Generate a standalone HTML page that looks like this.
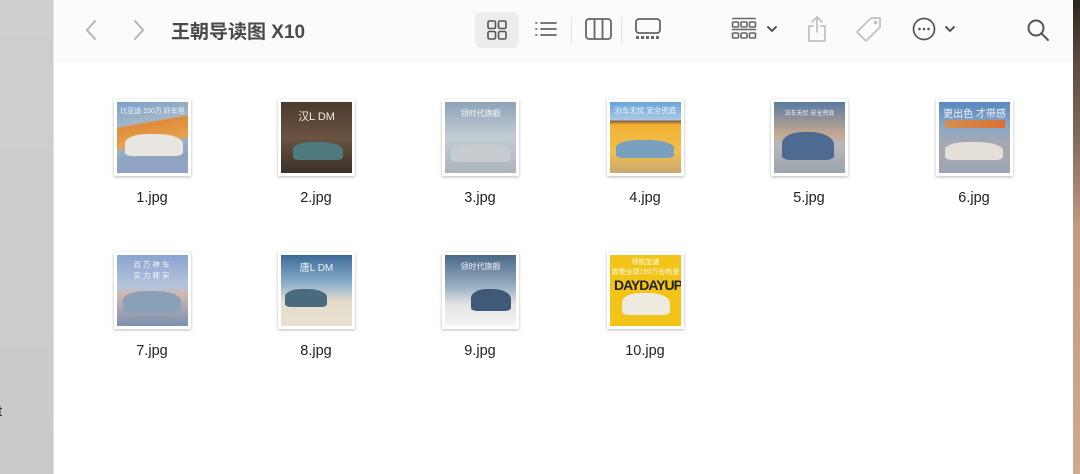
<!DOCTYPE html>
<html><head><meta charset="utf-8"><style>
*{margin:0;padding:0;box-sizing:border-box}
body{width:1080px;height:474px;overflow:hidden;position:relative;background:#fff;font-family:"Liberation Sans","Noto Sans CJK SC",sans-serif}
.left{position:absolute;left:0;top:0;width:54px;height:474px;background:linear-gradient(#cfcfcd,#cacac9)}
.left:after{content:"";position:absolute;right:0;top:0;width:1px;height:100%;background:#e2e2e2}
.right{position:absolute;left:1073px;top:0;width:7px;height:474px;background:linear-gradient(#2b2520 0,#5a4a3c 60px,#8a7060 150px,#c49a84 230px,#d0a890 474px)}
.win{position:absolute;left:55px;top:0;width:1018px;height:474px;background:#fff;border-top-right-radius:10px;overflow:hidden}
.tb{position:absolute;left:0;top:0;width:100%;height:63px;background:#fbfbfb}
.title{position:absolute;left:116px;top:17px;font-size:19px;font-weight:bold;color:#4a4a4a;letter-spacing:0}
svg.i{position:absolute}
.sel{position:absolute;left:420px;top:12px;width:44px;height:36px;background:#ececec;border-radius:7px}
.sep{position:absolute;top:17px;width:1px;height:26px;background:#e4e4e4}
.it{position:absolute;width:80px;text-align:center}
.th{position:absolute;left:2px;top:0;width:77px;height:77px;background:#fff;box-shadow:0 1px 3px rgba(0,0,0,.28);padding:3px}
.im{width:71px;height:71px;position:relative;overflow:hidden}
.lb{position:absolute;top:91px;left:0;width:80px;font-size:14.5px;color:#222}
.car{position:absolute;border-radius:40% 45% 15% 15%}
.tx{position:absolute;left:0;width:100%;text-align:center;color:#fff;font-size:7px;opacity:.9}
</style></head><body>
<div class="left"><div style="position:absolute;left:-2px;top:403px;font-size:15px;color:#333">t</div></div>
<div class="right"></div>
<div class="win">
<div class="tb">
<svg class="i" style="left:28px;top:18px" width="16" height="24" viewBox="0 0 16 24"><path d="M12 3 L4 12 L12 21" stroke="#b5b5b5" stroke-width="2" fill="none" stroke-linecap="round"/></svg>
<svg class="i" style="left:76px;top:18px" width="16" height="24" viewBox="0 0 16 24"><path d="M4 3 L12 12 L4 21" stroke="#b5b5b5" stroke-width="2" fill="none" stroke-linecap="round"/></svg>
<div class="title">王朝导读图 X10</div>
<div class="sel"></div>
<svg class="i" style="left:432px;top:20px" width="20" height="20" viewBox="0 0 20 20"><g stroke="#555" stroke-width="1.6" fill="none"><rect x="1" y="1" width="7.5" height="7.5" rx="1.5"/><rect x="11.5" y="1" width="7.5" height="7.5" rx="1.5"/><rect x="1" y="11.5" width="7.5" height="7.5" rx="1.5"/><rect x="11.5" y="11.5" width="7.5" height="7.5" rx="1.5"/></g></svg>
<svg class="i" style="left:479px;top:20px" width="24" height="18" viewBox="0 0 24 18"><g stroke="#666" stroke-width="1.8" stroke-linecap="round"><path d="M2 3h.5M2 9h.5M2 15h.5M7 3h15M7 9h15M7 15h15"/></g></svg>
<div class="sep" style="left:516px"></div>
<svg class="i" style="left:530px;top:18px" width="27" height="22" viewBox="0 0 27 22"><g stroke="#666" stroke-width="1.8" fill="none"><rect x="1" y="1" width="25" height="20" rx="3"/><path d="M9.5 1v20M17.5 1v20"/></g></svg>
<div class="sep" style="left:566px"></div>
<svg class="i" style="left:580px;top:18px" width="26" height="22" viewBox="0 0 26 22"><g stroke="#666" stroke-width="1.8" fill="none"><rect x="1" y="1" width="24" height="14" rx="3"/></g><g fill="#666"><rect x="1" y="18" width="3" height="3"/><rect x="6" y="18" width="3" height="3"/><rect x="11" y="18" width="3" height="3"/><rect x="16" y="18" width="3" height="3"/><rect x="21" y="18" width="3" height="3"/></g></svg>
<svg class="i" style="left:676px;top:17px" width="26" height="25" viewBox="0 0 26 25"><g stroke="#666" stroke-width="1.6" fill="none"><path d="M1 1.5h24M1 12.5h24"/><rect x="1.5" y="5" width="6" height="5" rx="1"/><rect x="10" y="5" width="6" height="5" rx="1"/><rect x="18.5" y="5" width="6" height="5" rx="1"/><rect x="1.5" y="16" width="6" height="5" rx="1"/><rect x="10" y="16" width="6" height="5" rx="1"/><rect x="18.5" y="16" width="6" height="5" rx="1"/></g></svg>
<svg class="i" style="left:711px;top:25px" width="12" height="9" viewBox="0 0 12 9"><path d="M2 2l4 4 4-4" stroke="#555" stroke-width="2" fill="none" stroke-linecap="round"/></svg>
<svg class="i" style="left:751px;top:15px" width="22" height="28" viewBox="0 0 22 28"><g stroke="#c0c0c0" stroke-width="1.7" fill="none" stroke-linecap="round" stroke-linejoin="round"><path d="M11 2v15M6 7l5-5 5 5M7 11H3v15h16V11h-4"/></g></svg>
<svg class="i" style="left:800px;top:16px" width="28" height="28" viewBox="0 0 28 28"><g stroke="#c0c0c0" stroke-width="1.7" fill="none" stroke-linejoin="round"><path d="M16 2h9v9L11 25 2 16z"/><circle cx="20.5" cy="6.5" r="1" fill="#c0c0c0"/></g></svg>
<svg class="i" style="left:857px;top:17px" width="24" height="24" viewBox="0 0 24 24"><circle cx="12" cy="12" r="10.5" stroke="#555" stroke-width="1.7" fill="none"/><g fill="#555"><circle cx="7.5" cy="12" r="1.3"/><circle cx="12" cy="12" r="1.3"/><circle cx="16.5" cy="12" r="1.3"/></g></svg>
<svg class="i" style="left:889px;top:25px" width="12" height="9" viewBox="0 0 12 9"><path d="M2 2l4 4 4-4" stroke="#555" stroke-width="2" fill="none" stroke-linecap="round"/></svg>
<svg class="i" style="left:971px;top:18px" width="24" height="24" viewBox="0 0 24 24"><g stroke="#555" stroke-width="2" fill="none" stroke-linecap="round"><circle cx="10" cy="10" r="7.5"/><path d="M15.5 15.5L22 22"/></g></svg>
</div>

<!-- row 1 -->
<div class="it" style="left:57px;top:99px"><div class="th"><div class="im" style="background:linear-gradient(170deg,#7aa0c8 0,#a6b6c8 30%,#e08a3a 32%,#e6a24a 55%,#9ab0c8 60%,#7a90b0 100%)"><div class="tx" style="top:4px">比亚迪 150万 好车型</div><div class="car" style="left:8px;top:32px;width:58px;height:22px;background:#e8e6e0"></div><div style="position:absolute;left:0;top:56px;width:100%;height:15px;background:#8ea4c2"></div></div></div><div class="lb">1.jpg</div></div>
<div class="it" style="left:221px;top:99px"><div class="th"><div class="im" style="background:linear-gradient(#4a3a2c,#6b5340 50%,#3a3028)"><div class="tx" style="top:6px;font-size:11px">汉L DM</div><div class="car" style="left:12px;top:40px;width:50px;height:18px;background:#4e7a7e"></div></div></div><div class="lb">2.jpg</div></div>
<div class="it" style="left:385px;top:99px"><div class="th"><div class="im" style="background:linear-gradient(#8ea2b8,#c4ccd4 50%,#aab4bc)"><div class="tx" style="top:6px;font-size:8px">领时代旗舰</div><div class="car" style="left:6px;top:42px;width:60px;height:18px;background:#c8ccd0"></div></div></div><div class="lb">3.jpg</div></div>
<div class="it" style="left:550px;top:99px"><div class="th"><div class="im" style="background:linear-gradient(#6aa4d8 0,#a8c8e4 25%,#8a6040 27%,#f2b030 32%,#f0c050 70%,#c8a870 100%)"><div class="tx" style="top:3px;font-size:7.5px">泊车无忧 安全兜底</div><div class="car" style="left:6px;top:38px;width:58px;height:18px;background:#7aa0c0"></div></div></div><div class="lb">4.jpg</div></div>
<div class="it" style="left:714px;top:99px"><div class="th"><div class="im" style="background:linear-gradient(#5a7aa0,#c4a890 45%,#b8b8bc 60%,#9ca4ac)"><div class="tx" style="top:6px;font-size:6px">泊车无忧 安全兜底</div><div class="car" style="left:8px;top:30px;width:52px;height:28px;background:#4e6a90"></div></div></div><div class="lb">5.jpg</div></div>
<div class="it" style="left:879px;top:99px"><div class="th"><div class="im" style="background:linear-gradient(#5a88c0,#8aa8c8 35%,#a8a8b0 60%,#9aa6b4)"><div class="tx" style="top:3px;font-size:10px">更出色 才带感</div><div style="position:absolute;left:6px;top:18px;width:60px;height:8px;background:linear-gradient(90deg,#d09050,#e07030)"></div><div class="car" style="left:6px;top:40px;width:58px;height:18px;background:#e4e0d8"></div></div></div><div class="lb">6.jpg</div></div>
<!-- row 2 -->
<div class="it" style="left:57px;top:252px"><div class="th"><div class="im" style="background:linear-gradient(#8aa4d0,#b4c4dc 45%,#d0b8b0 55%,#7a90b0)"><div class="tx" style="top:4px;font-size:7.5px;letter-spacing:2px">百万神车<br>实力称宋</div><div class="car" style="left:6px;top:36px;width:58px;height:22px;background:#8aa0b8"></div></div></div><div class="lb">7.jpg</div></div>
<div class="it" style="left:221px;top:252px"><div class="th"><div class="im" style="background:linear-gradient(#3e6a98,#8ab0cc 40%,#e4dccc 65%,#e8e0d0)"><div class="tx" style="top:4px;font-size:10px">唐L DM</div><div class="car" style="left:4px;top:34px;width:42px;height:18px;background:#4a6a80"></div></div></div><div class="lb">8.jpg</div></div>
<div class="it" style="left:385px;top:252px"><div class="th"><div class="im" style="background:linear-gradient(#4a6888,#9cb0c4 45%,#e4e4e4 70%,#f4f4f4)"><div class="tx" style="top:6px;font-size:8px">领时代旗舰</div><div class="car" style="left:26px;top:34px;width:40px;height:22px;background:#3e5a78"></div></div></div><div class="lb">9.jpg</div></div>
<div class="it" style="left:550px;top:252px"><div class="th"><div class="im" style="background:#f2c418"><div class="tx" style="top:2px;font-size:7px;color:#fff">领航加速<br>致敬全球150万份热爱</div><div style="position:absolute;left:4px;top:22px;font-size:14px;font-weight:bold;color:#222;letter-spacing:-1px">DAYDAYUP</div><div class="car" style="left:12px;top:38px;width:48px;height:22px;background:#eeeae0"></div></div></div><div class="lb">10.jpg</div></div>
</div>
</body></html>
